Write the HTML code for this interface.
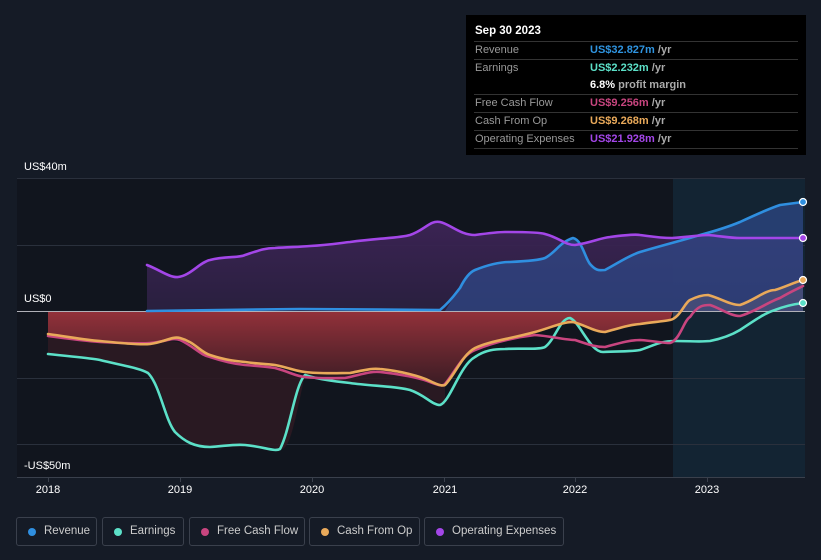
<!DOCTYPE html>
<html><head><meta charset="utf-8"><style>
html,body{margin:0;padding:0;background:#151b26;width:821px;height:560px;overflow:hidden;font-family:"Liberation Sans",sans-serif;}
.tt{position:absolute;left:466px;top:15px;width:340px;height:140px;background:#000;box-sizing:border-box;padding:8px 8px 0 8px;}
.tt .h{color:#fff;font-size:11.5px;font-weight:bold;height:18px;line-height:16px;padding-left:1px}
.tt .r{height:17px;border-top:1px solid #333;font-size:11px;line-height:17px;color:#999;position:relative}
.tt .r span.l{position:absolute;left:1px}
.tt .r span.v{position:absolute;left:116px;font-weight:bold}
.tt .r span.v i{font-style:normal;color:#aaa;font-weight:bold}
.ax{position:absolute;color:#fff;font-size:11px}
.yr{position:absolute;top:484px;color:#fff;font-size:11px;width:40px;text-align:center;margin-left:-20px}
.lg{position:absolute;top:517px;height:29px;border:1px solid #3a404c;border-radius:3px;box-sizing:border-box;color:#ccc;font-size:11.5px;line-height:27px;padding-left:27px}
.lg b{position:absolute;left:11px;top:10px;width:8px;height:8px;border-radius:50%}
</style></head><body>
<svg width="821" height="560" style="position:absolute;left:0;top:0">
<defs>
<linearGradient id="red" x1="0" y1="0" x2="0" y2="1"><stop offset="0" stop-color="#93313a"/><stop offset="1" stop-color="#3a1c24"/></linearGradient>
<linearGradient id="pur" x1="0" y1="0" x2="0" y2="1"><stop offset="0" stop-color="#3d2456"/><stop offset="1" stop-color="#2a2040"/></linearGradient>
</defs>
<rect x="17" y="178" width="656" height="300" fill="#11151e"/>
<rect x="673" y="178" width="132" height="300" fill="#132433"/>
<g stroke="#2a303c" stroke-width="1">
<line x1="17" y1="178.5" x2="805" y2="178.5"/><line x1="17" y1="245.5" x2="805" y2="245.5"/>
<line x1="17" y1="378.5" x2="805" y2="378.5"/><line x1="17" y1="444.5" x2="805" y2="444.5"/>
<line x1="17" y1="477.5" x2="805" y2="477.5" stroke="#3a404c"/>
</g>
<path d="M147,311 L147,265 C160,270 170,278 178,277 C190,276 200,262 210,260 C225,256 240,258 245,255 C260,250 265,248 275,248 C290,247 300,247 310,246 C330,245 340,243 350,242 C380,238 400,238 410,235 C425,230 430,220 440,222 C450,224 460,235 475,235 C490,233 500,232 505,232 C520,232 540,232 545,234 C560,238 565,245 575,245 C590,243 600,238 610,237 C625,235 635,234 640,235 C655,237 660,238 672,238 C690,237 700,235 708,235 C720,236 730,238 740,238 L803,238 L803,311 Z" fill="url(#pur)" opacity="0.95"/>
<path d="M445,311 C452,300 458,290 460,288 C465,278 470,272 475,270 C490,264 500,262 510,262 C530,261 540,260 545,258 C555,253 560,242 573,238 C582,240 585,258 590,264 C597,272 600,270 605,270 C620,262 628,256 640,252 C660,246 680,241 700,235 C715,231 728,227 740,222 C755,215 768,209 780,205 L803,202 L803,311 Z" fill="#2f4a8a" opacity="0.7"/>
<path d="M48,311 L48,334 C70,337 85,340 100,341 C120,343 140,345 150,344 C165,342 172,336 180,338 C195,342 200,352 210,355 C225,360 235,361 245,362 C260,364 268,364 275,365 C290,368 295,371 305,372 C320,374 340,373 350,373 C365,370 372,368 380,369 C400,371 420,376 430,381 C440,386 443,386 445,385 C455,375 462,355 475,348 C490,341 505,340 535,332 C550,328 562,322 573,322 C585,325 595,332 605,332 C620,328 628,325 640,324 C655,322 665,321 670,320 L673,311 Z" fill="url(#red)"/>
<path d="M48,334 C80,340 130,345 150,343 L150,373 C120,365 90,357 48,354 Z M150,343 C170,340 180,338 210,357 C240,365 290,370 305,377 L305,375 C295,420 290,452 280,449 C260,444 230,448 210,447 C190,443 178,440 175,432 C165,410 160,380 148,373 Z M305,372 C350,373 380,365 445,385 L445,405 C420,395 410,385 350,383 C330,382 315,380 305,375Z" fill="#2c1a22" opacity="0.9"/>
<path d="M673,320 C680,318 685,302 690,300 C698,296 704,295 708,295 C720,298 730,305 740,305 C755,300 765,290 775,290 L803,280 L803,311 L673,311 Z" fill="#5a5a7a" opacity="0.5"/>
<line x1="17" y1="311.5" x2="805" y2="311.5" stroke="#b0b0b8" stroke-width="1"/>
<g fill="none" stroke-width="2.6" stroke-linejoin="round" stroke-linecap="round">
<path stroke="#2f8fe0" d="M147,311 L300,309 L440,310 C452,300 458,290 460,288 C465,278 470,272 475,270 C490,264 500,262 510,262 C530,261 540,260 545,258 C555,253 560,242 573,238 C582,240 585,258 590,264 C597,272 600,270 605,270 C620,262 628,256 640,252 C660,246 680,241 700,235 C715,231 728,227 740,222 C755,215 768,209 780,205 L803,202"/>
<path stroke="#a346e8" d="M147,265 C160,270 170,278 178,277 C190,276 200,262 210,260 C225,256 240,258 245,255 C260,250 265,248 275,248 C290,247 300,247 310,246 C330,245 340,243 350,242 C380,238 400,238 410,235 C425,230 430,220 440,222 C450,224 460,235 475,235 C490,233 500,232 505,232 C520,232 540,232 545,234 C560,238 565,245 575,245 C590,243 600,238 610,237 C625,235 635,234 640,235 C655,237 660,238 672,238 C690,237 700,235 708,235 C720,236 730,238 740,238 L803,238"/>
<path stroke="#5ce0c8" d="M48,354 C75,357 90,358 100,360 C120,365 140,368 148,373 C160,385 165,420 175,432 C185,442 195,447 210,447 C225,446 235,444 245,445 C265,447 275,452 280,449 C290,430 295,385 305,375 C320,380 340,382 350,383 C370,386 395,386 410,390 C425,395 432,405 440,405 C450,402 460,365 475,357 C485,350 495,349 505,349 C520,348 540,350 545,347 C555,340 560,318 570,318 C580,322 590,352 603,352 C620,351 630,352 640,350 C655,345 660,341 675,341 C690,341 700,342 710,341 C725,338 735,333 740,330 C755,320 765,313 775,310 C785,306 795,304 803,303"/>
<path stroke="#c8457f" d="M48,336 C70,339 85,341 100,342 C120,343 140,344 150,343 C165,342 172,337 180,340 C195,347 200,355 210,357 C225,362 235,364 245,365 C260,366 268,367 275,368 C290,372 295,376 305,377 C320,379 340,378 345,378 C360,375 370,371 380,372 C400,374 420,378 430,382 C440,386 443,386 445,384 C455,372 462,355 475,350 C490,344 510,338 535,335 C550,336 565,340 575,340 C590,345 595,347 605,347 C620,343 630,340 640,340 C655,341 662,343 670,343 C680,340 684,320 690,317 C698,305 704,305 710,305 C720,308 730,316 740,316 C755,312 768,302 780,298 C790,292 797,289 803,286"/>
<path stroke="#e9a95a" d="M48,334 C70,337 85,340 100,341 C120,343 140,345 150,344 C165,342 172,336 180,338 C195,342 200,352 210,355 C225,360 235,361 245,362 C260,364 268,364 275,365 C290,368 295,371 305,372 C320,374 340,373 350,373 C365,370 372,368 380,369 C400,371 420,376 430,381 C440,386 443,386 445,385 C455,375 462,355 475,348 C490,341 505,340 535,332 C550,328 562,322 573,322 C585,325 595,332 605,332 C620,328 628,325 640,324 C655,322 665,321 670,320 C680,318 685,302 690,300 C698,296 704,295 708,295 C720,298 730,305 740,305 C755,300 765,290 775,290 C785,287 795,282 803,280"/>
</g>
<g stroke="#fff" stroke-width="1.2">
<circle cx="803" cy="202" r="3.5" fill="#2f8fe0"/>
<circle cx="803" cy="238" r="3.5" fill="#a346e8"/>
<circle cx="803" cy="280" r="3.5" fill="#e9a95a"/>
<circle cx="803" cy="303" r="3.5" fill="#5ce0c8"/>
</g>
<g stroke="#3a404c"><line x1="48.5" y1="478" x2="48.5" y2="482"/><line x1="180.5" y1="478" x2="180.5" y2="482"/><line x1="312.5" y1="478" x2="312.5" y2="482"/><line x1="444.5" y1="478" x2="444.5" y2="482"/><line x1="575.5" y1="478" x2="575.5" y2="482"/><line x1="707.5" y1="478" x2="707.5" y2="482"/></g>
</svg>
<div class="ax" style="left:24px;top:161px">US$40m</div>
<div class="ax" style="left:24px;top:293px">US$0</div>
<div class="ax" style="left:24px;top:460px">-US$50m</div>
<div class="yr" style="left:48px">2018</div><div class="yr" style="left:180px">2019</div><div class="yr" style="left:312px">2020</div><div class="yr" style="left:445px">2021</div><div class="yr" style="left:575px">2022</div><div class="yr" style="left:707px">2023</div>
<div class="tt">
<div class="h">Sep 30 2023</div>
<div class="r"><span class="l">Revenue</span><span class="v" style="color:#2f94e0">US$32.827m <i>/yr</i></span></div>
<div class="r"><span class="l">Earnings</span><span class="v" style="color:#5ce0c8">US$2.232m <i>/yr</i></span></div>
<div class="r" style="border-top:none"><span class="v" style="color:#fff">6.8% <i>profit margin</i></span></div>
<div class="r"><span class="l">Free Cash Flow</span><span class="v" style="color:#c8457f">US$9.256m <i>/yr</i></span></div>
<div class="r"><span class="l">Cash From Op</span><span class="v" style="color:#e9a95a">US$9.268m <i>/yr</i></span></div>
<div class="r"><span class="l">Operating Expenses</span><span class="v" style="color:#a346e8">US$21.928m <i>/yr</i></span></div>
<div class="r" style="height:1px"></div>
</div>
<div class="lg" style="left:16px;width:81px"><b style="background:#2f8fe0"></b>Revenue</div>
<div class="lg" style="left:102px;width:82px"><b style="background:#5ce0c8"></b>Earnings</div>
<div class="lg" style="left:189px;width:116px"><b style="background:#c8457f"></b>Free Cash Flow</div>
<div class="lg" style="left:309px;width:111px"><b style="background:#e9a95a"></b>Cash From Op</div>
<div class="lg" style="left:424px;width:140px"><b style="background:#a346e8"></b>Operating Expenses</div>
</body></html>
